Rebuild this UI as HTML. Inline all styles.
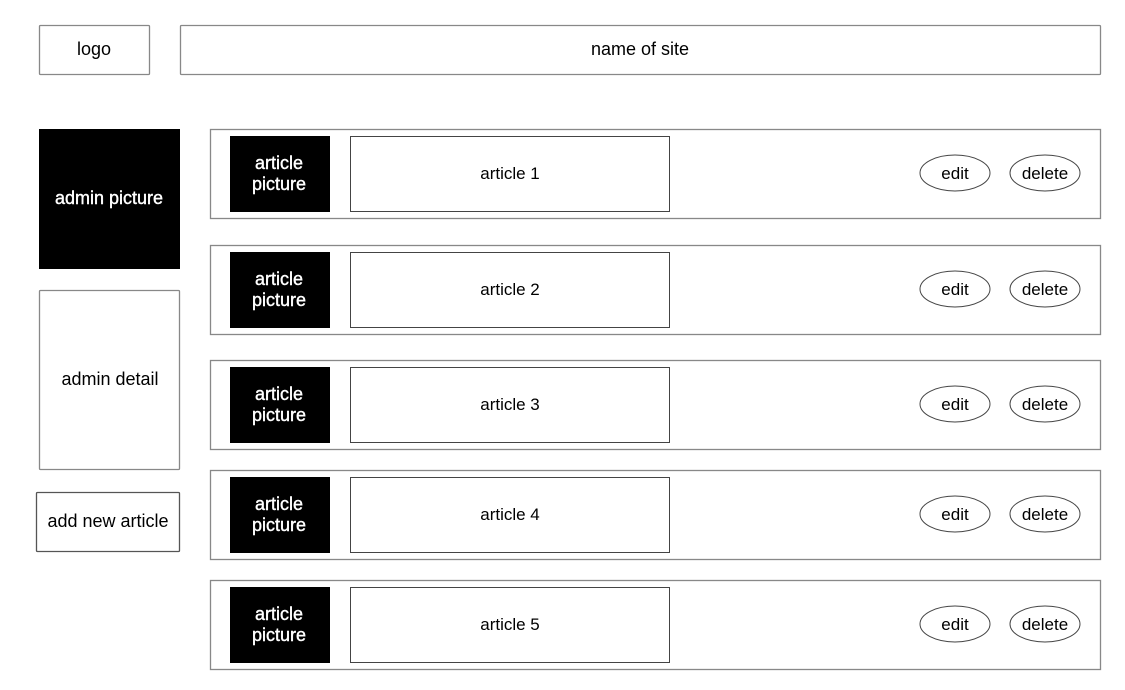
<!DOCTYPE html>
<html><head><meta charset="utf-8"><style>
html,body{margin:0;padding:0;background:#fff;}
svg{display:block;font-family:"Liberation Sans",Arial,sans-serif;font-size:18px;}
</style></head><body>
<svg width="1125" height="690" viewBox="0 0 1125 690" xmlns="http://www.w3.org/2000/svg">
<g fill="#fff" stroke="#888" stroke-width="1.3">
<rect x="39.5" y="25.5" width="110" height="49" rx="1"/>
<rect x="180.5" y="25.5" width="920" height="49" rx="1"/>
<rect x="39.5" y="290.5" width="140" height="179" rx="1"/>
<rect x="36.5" y="492.5" width="143" height="59" rx="1" stroke="#555"/>
</g>
<rect x="39" y="129" width="141" height="140" fill="#000"/>
<g text-anchor="middle" fill="#000">
<text x="94" y="55">logo</text>
<text x="640" y="55">name of site</text>
<text x="110" y="385">admin detail</text>
<text x="108" y="527">add new article</text>
</g>
<text x="109" y="204" text-anchor="middle" fill="#fff" stroke="#fff" stroke-width="0.4">admin picture</text>
<g fill="none" stroke="#888" stroke-width="1.3">
<rect x="210.5" y="129.5" width="890" height="89"/>
<rect x="210.5" y="245.5" width="890" height="89"/>
<rect x="210.5" y="360.5" width="890" height="89"/>
<rect x="210.5" y="470.5" width="890" height="89"/>
<rect x="210.5" y="580.5" width="890" height="89"/>
</g>
<g fill="#000">
<rect x="230" y="136" width="100" height="76"/>
<rect x="230" y="252" width="100" height="76"/>
<rect x="230" y="367" width="100" height="76"/>
<rect x="230" y="477" width="100" height="76"/>
<rect x="230" y="587" width="100" height="76"/>
</g>
<g fill="none" stroke="#444" stroke-width="1">
<rect x="350.5" y="136.5" width="319" height="75"/>
<rect x="350.5" y="252.5" width="319" height="75"/>
<rect x="350.5" y="367.5" width="319" height="75"/>
<rect x="350.5" y="477.5" width="319" height="75"/>
<rect x="350.5" y="587.5" width="319" height="75"/>
<ellipse cx="955" cy="173" rx="35" ry="18"/><ellipse cx="1045" cy="173" rx="35" ry="18"/>
<ellipse cx="955" cy="289" rx="35" ry="18"/><ellipse cx="1045" cy="289" rx="35" ry="18"/>
<ellipse cx="955" cy="404" rx="35" ry="18"/><ellipse cx="1045" cy="404" rx="35" ry="18"/>
<ellipse cx="955" cy="514" rx="35" ry="18"/><ellipse cx="1045" cy="514" rx="35" ry="18"/>
<ellipse cx="955" cy="624" rx="35" ry="18"/><ellipse cx="1045" cy="624" rx="35" ry="18"/>
</g>
<g text-anchor="middle" fill="#fff" stroke="#fff" stroke-width="0.4">
<text x="279" y="169">article</text><text x="279" y="190">picture</text>
<text x="279" y="285">article</text><text x="279" y="306">picture</text>
<text x="279" y="400">article</text><text x="279" y="421">picture</text>
<text x="279" y="510">article</text><text x="279" y="531">picture</text>
<text x="279" y="620">article</text><text x="279" y="641">picture</text>
</g>
<g text-anchor="middle" fill="#000" font-size="17">
<text x="510" y="179">article 1</text><text x="955" y="179">edit</text><text x="1045" y="179">delete</text>
<text x="510" y="295">article 2</text><text x="955" y="295">edit</text><text x="1045" y="295">delete</text>
<text x="510" y="410">article 3</text><text x="955" y="410">edit</text><text x="1045" y="410">delete</text>
<text x="510" y="520">article 4</text><text x="955" y="520">edit</text><text x="1045" y="520">delete</text>
<text x="510" y="630">article 5</text><text x="955" y="630">edit</text><text x="1045" y="630">delete</text>
</g>
</svg>
</body></html>
